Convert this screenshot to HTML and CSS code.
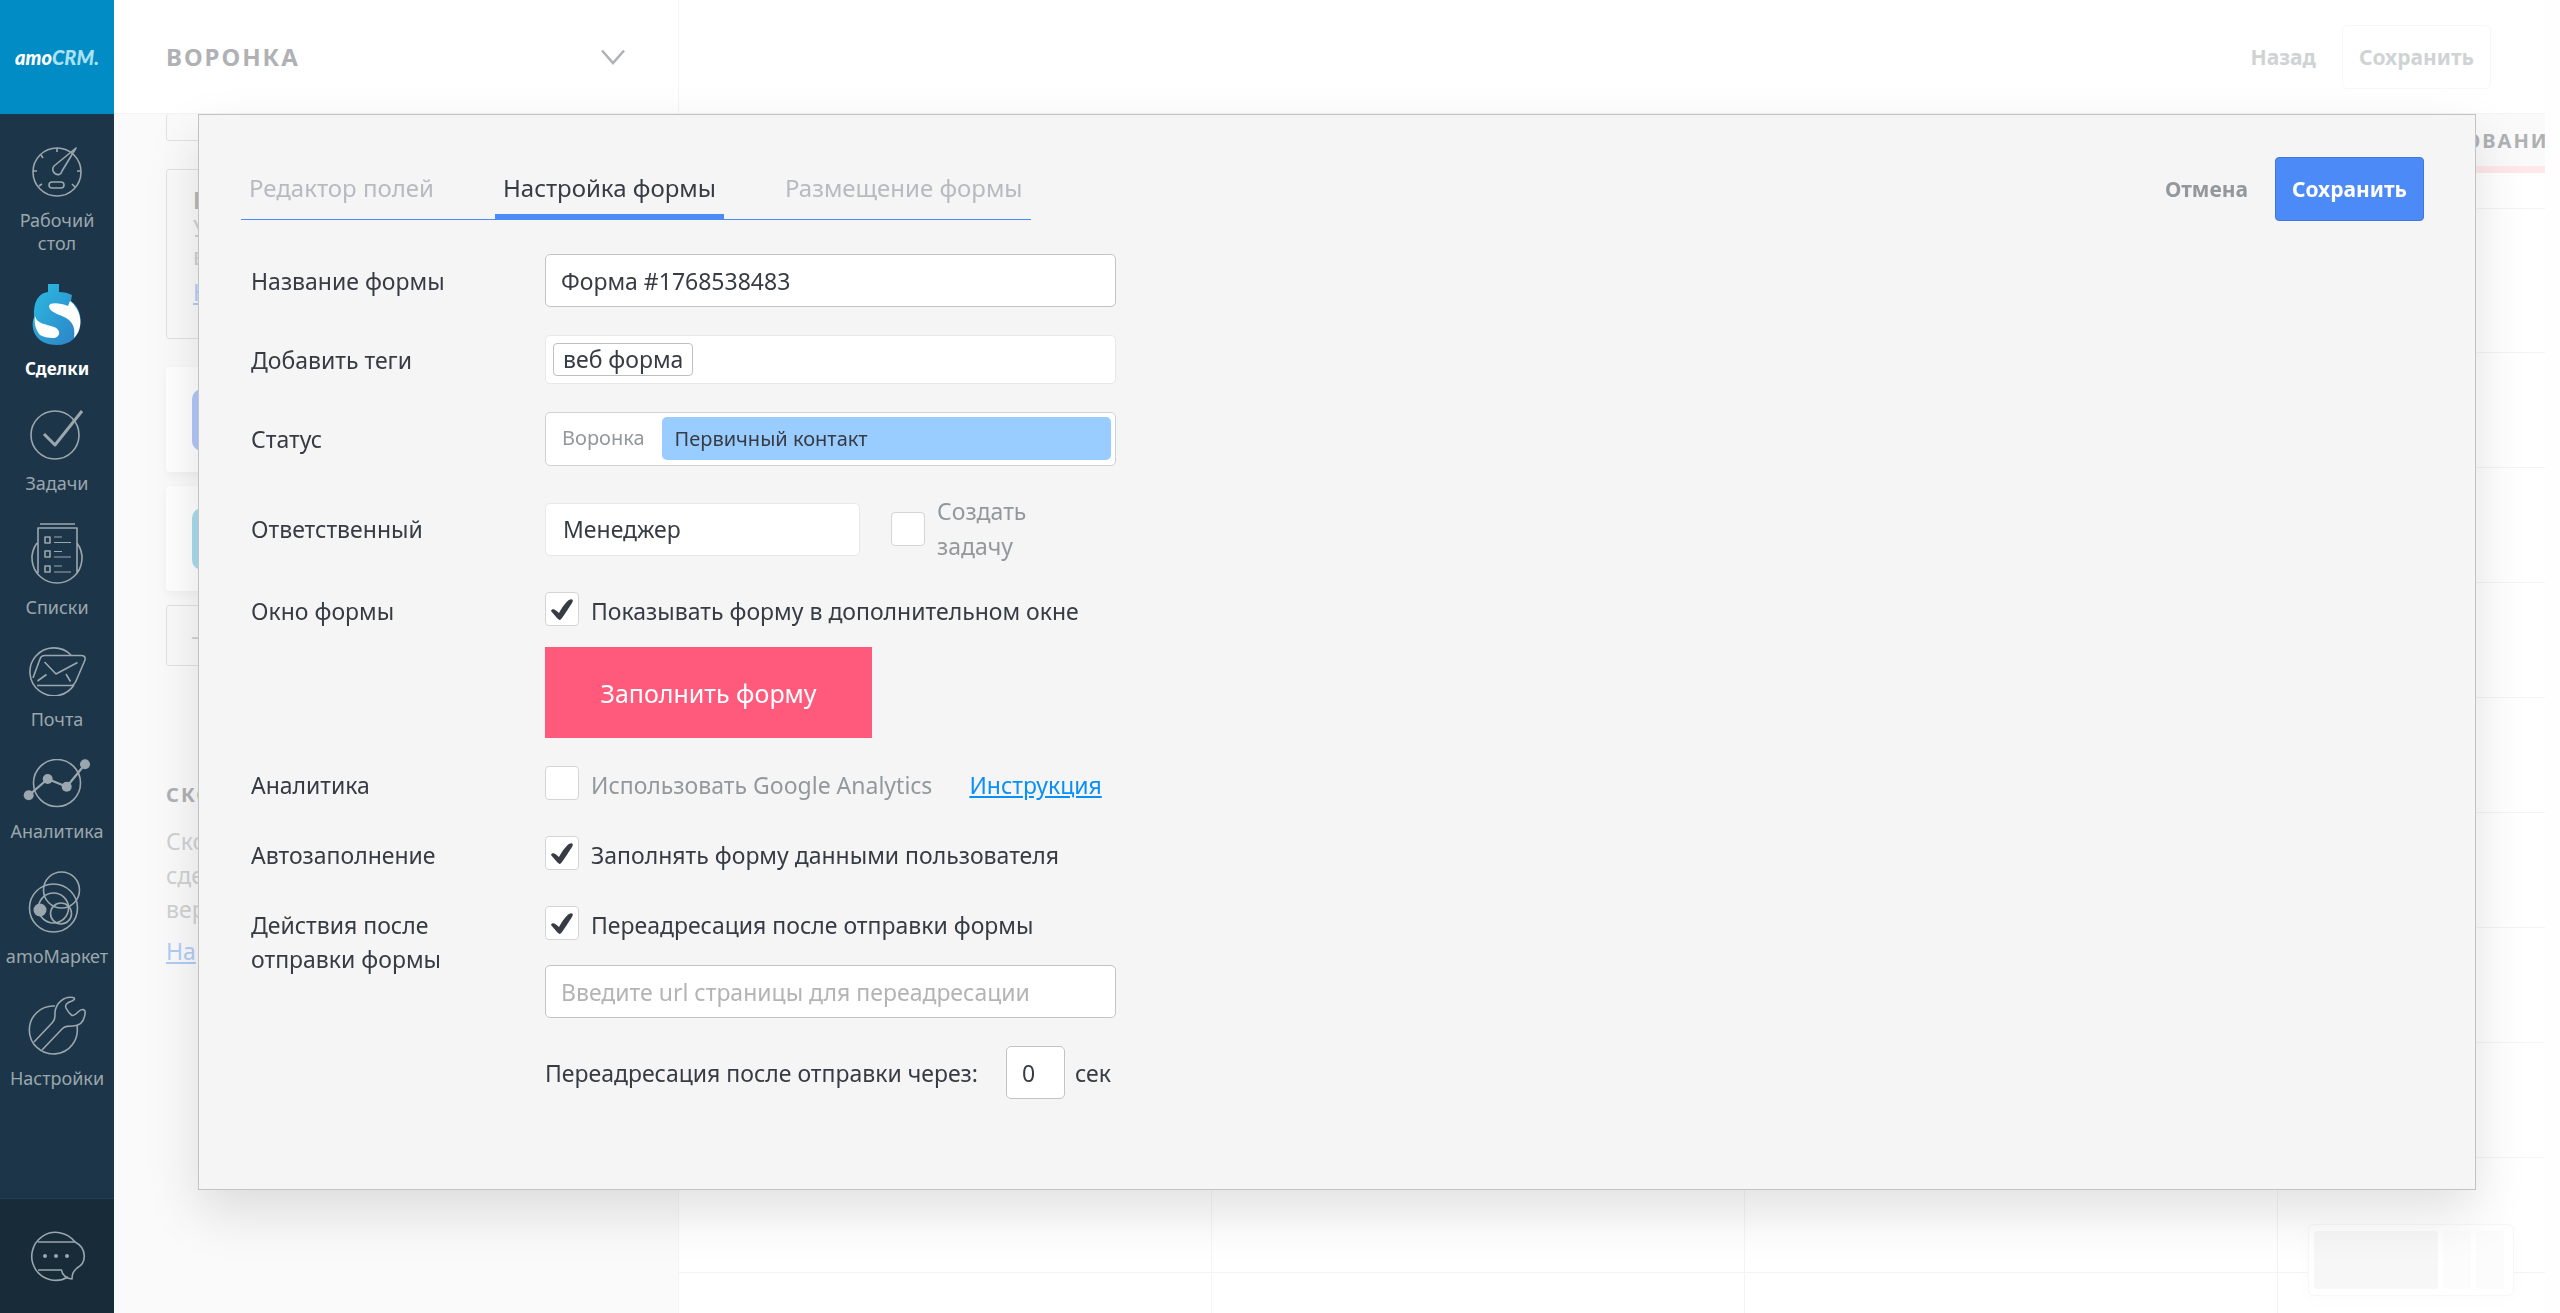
FILE: index.html
```html
<!DOCTYPE html>
<html lang="ru">
<head>
    <meta charset="UTF-8">
    <meta name="viewport" content="width=device-width, initial-scale=1.0">
    <title>amoCRM — Воронка</title>
    <link rel="stylesheet" href="styles.css">
</head>
<body>
  <!-- Боковое меню -->
  <nav class="sidebar">
    <a href="#" class="logo"><span>amo</span>CRM.</a>

    <ul class="menu">
      <li><a href="#">
        <svg width="114" height="51" viewBox="0 0 114 51">
          <circle cx="57" cy="26" r="24"/>
          <path d="M76 2 L54 20 C49 26 60 33 62 25 Z"/>
          <rect x="49" y="36" width="15" height="6" rx="3"/>
          <path d="M57 2v4M41 9l2 3M33 25h4M77 25h4M39 40l3-2M72 38l3 3"/>
        </svg>
        Рабочий<br>стол
      </a></li>
      <li><a href="#" class="active">
        <svg width="114" height="62" viewBox="0 0 114 62">
          <defs>
            <linearGradient id="deals" x1="0" y1="0" x2="1" y2="1">
              <stop offset="0.2" stop-color="#2bb0dc"/>
              <stop offset="1" stop-color="#2f7fc6"/>
            </linearGradient>
          </defs>
          <g stroke="none">
            <path fill="url(#deals)" d="M34 34 C33 18 39 10 48 9 V1 H59 V9 C64 9 68 10 72 12 L71 18 C87 29 84 62 57 62 C34 62 30 44 34 34 Z"/>
            <path fill="#fff" d="M49 23 C50 19 60 20 68 23 L70 18 C82 27 84 45 74 55 C76 42 71 37 62 33 C55 30 49 28 49 23 Z"/>
            <path fill="#fff" d="M35 33 C37 41 46 41 54 44 C62 47 60 55 53 55 C48 55 43 54 40 52 C35 46 34 39 35 33 Z"/>
          </g>
        </svg>
        Сделки
      </a></li>
      <li><a href="#">
        <svg width="114" height="52" viewBox="0 0 114 52">
          <circle cx="55" cy="27" r="24"/>
          <path stroke-width="3" d="M44 26 L55 37 L82 3"/>
        </svg>
        Задачи
      </a></li>
      <li><a href="#">
        <svg width="114" height="61" viewBox="0 0 114 61">
          <path d="M40 1H75M38 50V5H77V50M37 20A25 25 0 1 0 77 20"/>
          <path d="M45 14h5v6h-5zM45 28h5v6h-5zM45 43h5v6h-5z"/>
          <path stroke-width="1.2" d="M54 14h8M54 19.500h17M54 28.500h8M54 34h17M54 43h8M54 49h17"/>
        </svg>
        Списки
      </a></li>
      <li><a href="#">
        <svg width="114" height="49" viewBox="0 0 114 49">
          <path d="M71 8A24 24 0 1 0 74 38"/>
          <path d="M33 31L40 12Q41 8.500 45 8.500H81Q86 8.500 85 13L76 34Q74 38.500 71 38.500H37"/>
          <path d="M44.500 15L56 27L77.500 15.500M46.500 27.500L37.500 34M66 27L70.500 34.500"/>
        </svg>
        Почта
      </a></li>
      <li><a href="#">
        <svg width="114" height="49" viewBox="0 0 114 49">
          <circle cx="57" cy="24" r="23.500"/>
          <path stroke-width="2.200" d="M28.700 36.300L47.700 20L66.700 27.700L85 5.300"/>
          <g class="dot">
            <circle cx="28.700" cy="36.300" r="5"/><circle cx="47.700" cy="20" r="5"/>
            <circle cx="66.700" cy="27.700" r="5"/><circle cx="85" cy="5.300" r="5"/>
          </g>
        </svg>
        Аналитика
      </a></li>
      <li><a href="#">
        <svg width="114" height="62" viewBox="0 0 114 62">
          <circle cx="61.500" cy="19" r="18"/>
          <circle cx="53.500" cy="37" r="24"/>
          <circle cx="53.500" cy="37" r="15"/>
          <circle cx="61" cy="42.500" r="10.500"/>
          <circle class="dot" cx="40" cy="39" r="6.500"/>
        </svg>
        amoМаркет
      </a></li>
      <li><a href="#">
        <svg width="114" height="59" viewBox="0 0 114 59">
          <path d="M55 10A24 24 0 1 0 77 30"/>
          <path d="M34 46L52 27C55 24 55 21 55 16C56 7 64 0 73 1.500C76 2 74 4 72 5C66 7 65 9 66 12C68 16 70 18 72 19.500C74 20 76 18 78 16C82 12 86 13 85 18C84 25 80 30 73 30C68 30 65 30 62 33L42 54"/>
        </svg>
        Настройки
      </a></li>
    </ul>

    <button class="chat" aria-label="Чат">
      <svg width="114" height="51" viewBox="0 0 114 51">
        <path d="M75 11A24 24 0 1 0 68 46"/>
        <path d="M38 11H75C87 17 87 32 77 37C73 41 72 43 72 48C67 48 62 44 61.500 39H38"/>
        <g class="dot"><circle cx="45" cy="25" r="2"/><circle cx="56" cy="25" r="2"/><circle cx="67" cy="25" r="2"/></g>
      </svg>
    </button>
  </nav>

  <!-- Страница воронки под модальным окном -->
  <div class="page">
    <header class="topbar">
      <div class="pipeline-name">
        <h1>ВОРОНКА</h1>
        <svg width="24" height="16" viewBox="0 0 24 16"><path d="M1 1.500L12 14L23 1.500"/></svg>
      </div>
      <div class="topbar-actions">
        <button class="back">Назад</button>
        <button class="save-page">Сохранить</button>
      </div>
    </header>

    <div class="content">
      <aside class="sources">
        <div class="source-box first"></div>
        <div class="source-box about">
          <b>Н</b>
          <p>У<br>в</p>
          <a href="#">Н</a>
        </div>
        <div class="source-card"><i class="blue"></i></div>
        <div class="source-card"><i class="cyan"></i></div>
        <div class="source-box add">—</div>
        <h2>СКО</h2>
        <p>Ско<br>сде<br>вер</p>
        <a href="#">На</a>
      </aside>
      <div class="board">
        <section class="stage"><h3></h3><div></div><div></div><div></div><div></div><div></div><div></div><div></div><div></div><div></div><div></div><div></div></section>
        <section class="stage"><h3></h3><div></div><div></div><div></div><div></div><div></div><div></div><div></div><div></div><div></div><div></div><div></div></section>
        <section class="stage"><h3></h3><div></div><div></div><div></div><div></div><div></div><div></div><div></div><div></div><div></div><div></div><div></div></section>
        <section class="stage pink"><h3>СОГЛАСОВАНИЕ ДОГОВОРА</h3><div></div><div></div><div></div><div></div><div></div><div></div><div></div><div></div><div></div><div></div><div></div></section>
      </div>
    </div>

    <div class="minimap"><span class="view"></span><span></span><span></span></div>
  </div>

  <!-- Окно настройки формы -->
  <div class="overlay">
    <div class="modal" role="dialog" aria-label="Настройка формы">
      <div class="modal-head">
        <div class="tabs" role="tablist">
          <button role="tab">Редактор полей</button>
          <button role="tab" class="active" aria-selected="true">Настройка формы</button>
          <button role="tab">Размещение формы</button>
        </div>
        <div class="modal-actions">
          <button class="cancel">Отмена</button>
          <button class="save">Сохранить</button>
        </div>
      </div>

      <form class="settings">
        <div class="row">
          <label class="name" for="formName">Название формы</label>
          <input class="text" type="text" id="formName" value="Форма #1768538483">
        </div>

        <div class="row">
          <label class="name" for="tags">Добавить теги</label>
          <div class="tags"><span class="tag">веб форма</span><input type="text" id="tags"></div>
        </div>

        <div class="row">
          <label class="name" for="status">Статус</label>
          <button type="button" class="status" id="status"><span>Воронка</span><span class="step">Первичный контакт</span></button>
        </div>

        <div class="row">
          <label class="name" for="manager">Ответственный</label>
          <div class="responsible">
            <input class="text light" type="text" id="manager" value="Менеджер">
            <label class="check muted"><input type="checkbox"><span>Создать задачу</span></label>
          </div>
        </div>

        <div class="row top">
          <span class="name">Окно формы</span>
          <div class="stack">
            <label class="check"><input type="checkbox" checked><span>Показывать форму в дополнительном окне</span></label>
            <button type="button" class="fill">Заполнить форму</button>
          </div>
        </div>

        <div class="row top">
          <span class="name">Аналитика</span>
          <div class="analytics">
            <label class="check muted"><input type="checkbox"><span>Использовать Google Analytics</span></label>
            <a href="#">Инструкция</a>
          </div>
        </div>

        <div class="row top">
          <span class="name">Автозаполнение</span>
          <label class="check"><input type="checkbox" checked><span>Заполнять форму данными пользователя</span></label>
        </div>

        <div class="row top">
          <span class="name">Действия после<br>отправки формы</span>
          <div class="stack">
            <label class="check"><input type="checkbox" checked><span>Переадресация после отправки формы</span></label>
            <input class="text" type="text" aria-label="URL страницы" placeholder="Введите url страницы для переадресации">
            <div class="delay">
              <label for="delay">Переадресация после отправки через:</label>
              <input class="text" type="text" id="delay" value="0">
              <span>сек</span>
            </div>
          </div>
        </div>
      </form>
    </div>
  </div>
</body>
</html>
```
FILE: styles.css
```css
/* Общие стили */
* {
    box-sizing: border-box;
}

body {
    margin: 0;
    display: flex;
    height: 100vh;
    overflow: hidden;
    font-family: "Noto Sans", sans-serif;
    font-size: 23px;
    line-height: 34px;
    color: #363b44;
    background: #fefefe;
}

button, input {
    font: inherit;
    color: inherit;
}

button {
    padding: 0;
    border: 0;
    background: none;
    cursor: pointer;
}

h1, h2, h3, p, ul {
    margin: 0;
    padding: 0;
}

/* Боковое меню */
.sidebar {
    flex: 0 0 114px;
    display: flex;
    flex-direction: column;
    background: #1d3548;
}

.logo {
    height: 114px;
    display: flex;
    align-items: center;
    justify-content: center;
    font: italic 900 20px/24px Lato, sans-serif;
    color: #a9e2f7;
    background: #028cc5;
    text-decoration: none;
}

.logo span {
    color: #fff;
}

.menu {
    flex: 1;
    display: flex;
    flex-direction: column;
    gap: 28px;
    padding-top: 32px;
    list-style: none;
}

.menu a {
    display: block;
    font-size: 18px;
    line-height: 23px;
    text-align: center;
    color: #9ba7ae;
    text-decoration: none;
}

.menu a.active {
    font-size: 17px;
    font-weight: bold;
    color: #fff;
}

.menu svg {
    display: block;
    margin-bottom: 12px;
}

.sidebar svg {
    fill: none;
    stroke: #9ba7ae;
    stroke-width: 1.6;
    stroke-linejoin: round;
}

.sidebar .dot {
    fill: #9ba7ae;
    stroke: none;
}

.chat {
    height: 115px;
    border-top: 1px solid #1c4158;
    background: #172b38;
}

.chat svg {
    display: block;
}

/* Фоновая страница */
.page {
    flex: 1;
    min-width: 0;
    display: flex;
    flex-direction: column;
    margin-right: 15px;
    background: #fff;
}

.topbar {
    flex: 0 0 114px;
    display: flex;
    justify-content: space-between;
    border-bottom: 1px solid #f4f4f4;
}

.pipeline-name {
    width: 565px;
    display: flex;
    align-items: center;
    justify-content: space-between;
    padding: 0 53px 0 52px;
    border-right: 1px solid #f4f4f4;
}

.pipeline-name h1 {
    font-size: 24px;
    letter-spacing: 2px;
    color: #afb1b4;
}

.pipeline-name svg {
    fill: none;
    stroke: #afb1b4;
    stroke-width: 2.5;
}

.topbar-actions {
    display: flex;
    align-items: center;
    gap: 26px;
    padding-right: 54px;
    font-size: 21px;
    font-weight: bold;
    color: #d0d3d4;
}

.save-page {
    width: 149px;
    height: 64px;
    border: 1px solid #f8f8f8;
    border-radius: 5px;
}

.content {
    flex: 1;
    min-height: 0;
    display: flex;
}

.sources {
    flex: 0 0 565px;
    padding: 0 52px;
    overflow: hidden;
    border-right: 1px solid #f4f4f4;
    background: #fafafa;
    color: #cfd2d3;
}

.sources a {
    display: block;
    margin-top: 8px;
    color: #b0cdf6;
}

.sources h2 {
    margin: 112px 0 12px;
    font-size: 20px;
    line-height: 34px;
    letter-spacing: 2px;
    color: #afb1b4;
}

.source-box {
    border: 1px solid #e2e2e2;
    border-radius: 3px;
}

.source-box.first {
    height: 27px;
    border-top: 0;
}

.source-box.about {
    height: 170px;
    margin: 28px 0;
    padding: 16px 26px;
    line-height: 28px;
}

.source-box.about b {
    color: #b4b6b9;
}

.source-box.add {
    height: 61px;
    padding: 12px 24px;
}

.source-card {
    height: 105px;
    margin-bottom: 14px;
    padding: 22px 26px;
    border-radius: 4px;
    background: #fff;
    box-shadow: 0 3px 10px rgba(0, 0, 0, 0.04);
}

.source-card i {
    display: block;
    width: 62px;
    height: 62px;
    border-radius: 10px;
}

.source-card .blue {
    background: #b1c8f9;
}

.source-card .cyan {
    background: #aadcee;
}

/* Колонки этапов */
.board {
    flex: 1;
    min-width: 0;
    display: flex;
    overflow: hidden;
}

.stage {
    flex: 0 0 533px;
    border-right: 1px solid #f4f4f4;
}

.stage h3 {
    height: 59px;
    padding-right: 18px;
    border-bottom: 7px solid #fafafa;
    font-size: 20px;
    line-height: 54px;
    letter-spacing: 2px;
    text-align: center;
    color: #afb1b4;
    background: #fafafa;
}

.stage.pink h3 {
    border-bottom-color: #fee8ea;
}

.stage div {
    height: 115px;
    border-bottom: 1px solid #f4f4f4;
}

.stage div:nth-of-type(1) {
    height: 36px;
}

.stage div:nth-of-type(2) {
    height: 144px;
}

.minimap {
    position: absolute;
    right: 46px;
    bottom: 17px;
    display: flex;
    gap: 5px;
    padding: 6px 9px 6px 5px;
    border: 1px solid #f7f7f7;
    border-radius: 6px;
    background: #fff;
    box-shadow: 0 4px 20px rgba(0, 0, 0, 0.02);
}

.minimap span {
    width: 28px;
    height: 58px;
    border-radius: 4px;
    background: #fcfcfc;
}

.minimap .view {
    width: 124px;
    background: #f7f7f7;
}

/* Модальное окно */
.overlay {
    position: fixed;
    inset: 0 0 0 114px;
    padding: 114px 84px 0;
}

.modal {
    padding: 42px 51px 90px 42px;
    border: 1px solid #c2c3c4;
    background: #f5f5f5;
    box-shadow: 0 22px 50px rgba(0, 0, 0, 0.12);
}

.modal-head {
    display: flex;
    align-items: flex-start;
    justify-content: space-between;
    margin-bottom: 33px;
}

.tabs {
    display: flex;
    gap: 53px;
    border-bottom: 1px solid #4c8bf7;
    font-size: 24px;
}

.tabs button {
    height: 62px;
    padding: 5px 8px 0;
    border-bottom: 5px solid transparent;
    color: #b7bac0;
}

.tabs button.active {
    border-color: #4c8bf7;
    color: #363b44;
}

.modal-actions {
    display: flex;
    align-items: center;
    gap: 27px;
    font-size: 21px;
    font-weight: bold;
}

.cancel {
    color: #92989b;
}

.save {
    width: 149px;
    height: 64px;
    border: 1px solid #3f78dc;
    border-radius: 4px;
    color: #fff;
    background: #4c8bf7;
}

/* Строки настроек */
.settings {
    display: flex;
    flex-direction: column;
    gap: 28px;
    max-width: 875px;
    padding-left: 10px;
}

.row {
    display: grid;
    grid-template-columns: 294px minmax(0, 1fr);
    align-items: center;
}

.row.top {
    align-items: start;
    min-height: 42px;
}

.row.top .name {
    padding-top: 2px;
}

.text {
    width: 100%;
    height: 53px;
    padding: 0 15px;
    border: 1px solid #c2c3c5;
    border-radius: 5px;
    background: #fff;
}

.text.light {
    width: 315px;
    padding: 0 17px;
    border-color: #e8e8e9;
}

.text::placeholder {
    color: #b4b4b4;
}

.tags {
    display: flex;
    align-items: center;
    height: 49px;
    padding: 0 7px;
    border: 1px solid #e8e8e9;
    border-radius: 5px;
    background: #fff;
}

.tag {
    padding: 0 9px;
    border: 1px solid #bfc0c2;
    border-radius: 4px;
    line-height: 31px;
}

.tags input {
    flex: 1;
    min-width: 0;
    border: 0;
    outline: 0;
    background: none;
}

.status {
    display: flex;
    align-items: center;
    gap: 17px;
    height: 54px;
    padding: 4px 4px 6px 16px;
    border: 1px solid #d0d1d3;
    border-radius: 5px;
    background: #fff;
    font-size: 20px;
    text-align: left;
    color: #92989b;
}

.status .step {
    flex: 1;
    padding: 0 13px;
    border-radius: 5px;
    line-height: 43px;
    color: #363b44;
    background: #99ccff;
}

.responsible {
    display: flex;
    align-items: center;
    gap: 31px;
    line-height: 35px;
}

.responsible .check {
    align-items: center;
    width: 160px;
}

.check {
    display: flex;
    align-items: flex-start;
    gap: 12px;
}

.check.muted {
    color: #92989b;
}

.row.top .check span {
    padding-top: 2px;
}

.check input {
    appearance: none;
    flex: 0 0 34px;
    height: 34px;
    margin: 0;
    border: 1px solid #d4d5d6;
    border-radius: 4px;
    background: #fff;
}

.check input:checked {
    background: #fff url('data:image/svg+xml,<svg xmlns="http://www.w3.org/2000/svg" viewBox="0 0 32 32"><path fill="%23363b44" d="M5 18C6 15 9 16 13 20C17 13 20 9 23 7C26 5 28 7 26 10C22 16 19 21 16 25C14 28 13 27 11 25Z"/></svg>') center / 100%;
}

.stack {
    display: flex;
    flex-direction: column;
    align-items: flex-start;
    gap: 28px;
}

.stack .check {
    margin-bottom: -5px;
}

.fill {
    width: 327px;
    height: 91px;
    margin-top: -4px;
    font-size: 25px;
    color: #fff;
    background: #ff5a7c;
}

.analytics {
    display: flex;
    gap: 37px;
}

.analytics a {
    padding-top: 2px;
    color: #0a8ff7;
}

.delay {
    display: flex;
    align-items: center;
}

.delay .text {
    width: 59px;
    margin: 0 10px 0 28px;
}
```
